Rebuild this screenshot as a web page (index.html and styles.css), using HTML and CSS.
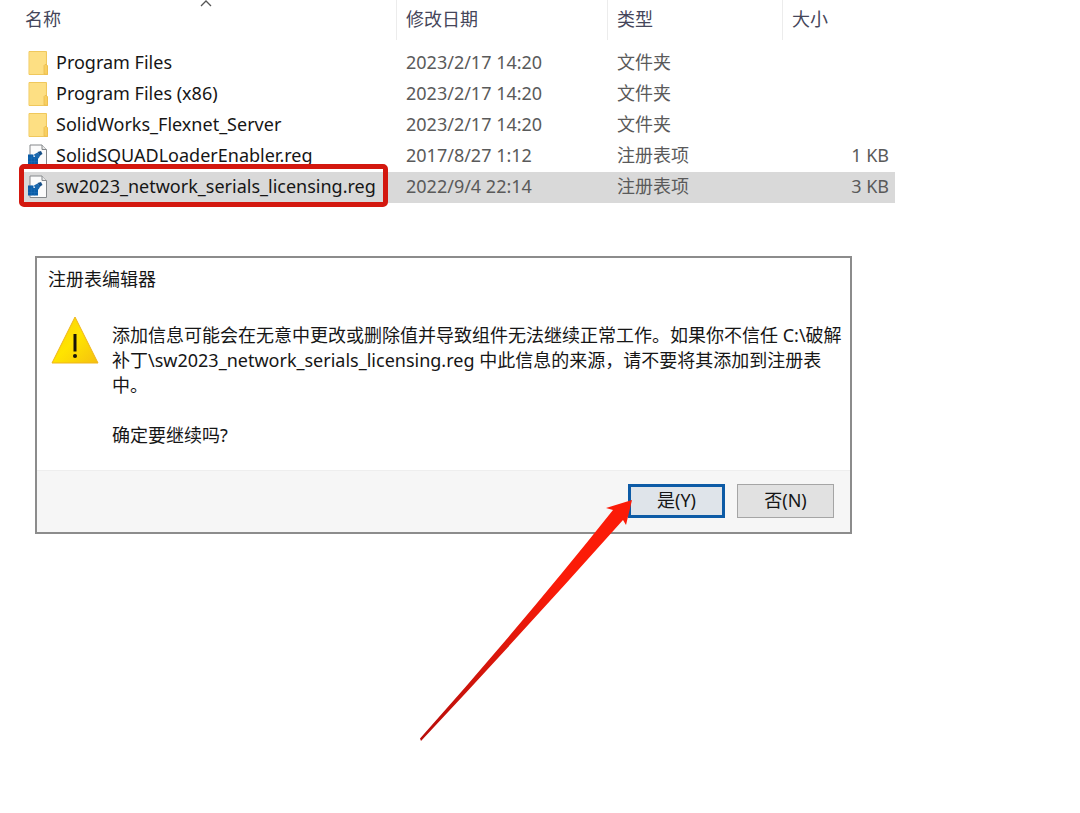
FILE: index.html
```html
<!DOCTYPE html>
<html lang="zh-CN">
<head>
<meta charset="utf-8">
<title>注册表编辑器</title>
<link rel="stylesheet" href="styles.css">
</head>
<body>
<svg class="symbols" aria-hidden="true">
  <symbol id="folder" viewBox="0 0 20 24">
    <path d="M1 0.5H18.5V14L19.5 15V23.5H1Z" fill="#fbdc7c" stroke="#f0c85c"/>
    <path d="M1.5 1H17.500V23H1.500Z" fill="#fddf83"/>
    <path d="M16 23V14.500L17 13.500H18.500L19.500 15V23.500Z" fill="#f8cf60" stroke="#e9b94b" stroke-width=".7"/>
  </symbol>
  <symbol id="reg" viewBox="0 0 20 24">
    <path d="M2 1H14L18.500 5.500V22.500H2Z" fill="#fbfbfb" stroke="#85888b"/>
    <path d="M14 1V5.500H18.500" fill="#e8e8e8" stroke="#85888b"/>
    <path d="M0 10.500H5.500V13H10V20.500H0Z" fill="#0a5da8"/>
    <path d="M0 14H10M0 17.500H10M3.300 10.500V20.500M6.600 14V20.500" stroke="#2272b8" stroke-width=".5"/>
    <path d="M6 10.500L9.500 8.500L12.500 11L10.500 14.500L7 13Z" fill="#1a68ae"/>
    <path d="M9.500 8L13 7L14.500 10L12 11.500Z" fill="#174f86"/>
  </symbol>
</svg>
<main>
  <table class="files">
    <colgroup><col><col class="col-date"><col class="col-type"><col class="col-size"></colgroup>
    <thead>
      <tr>
        <th scope="col" aria-sort="ascending">名称<svg class="sort" viewBox="0 0 12 7" aria-hidden="true"><path d="M1 6L6 1L11 6" fill="none" stroke="#555" stroke-width="1.300"/></svg></th>
        <th scope="col">修改日期</th><th scope="col">类型</th><th scope="col">大小</th>
      </tr>
    </thead>
    <tbody>
      <tr><td><div class="file"><svg class="icon" aria-hidden="true"><use href="#folder"/></svg>Program Files</div></td><td>2023/2/17 14:20</td><td>文件夹</td><td></td></tr>
      <tr><td><div class="file"><svg class="icon" aria-hidden="true"><use href="#folder"/></svg>Program Files (x86)</div></td><td>2023/2/17 14:20</td><td>文件夹</td><td></td></tr>
      <tr><td><div class="file"><svg class="icon" aria-hidden="true"><use href="#folder"/></svg>SolidWorks_Flexnet_Server</div></td><td>2023/2/17 14:20</td><td>文件夹</td><td></td></tr>
      <tr><td><div class="file"><svg class="icon" aria-hidden="true"><use href="#reg"/></svg>SolidSQUADLoaderEnabler.reg</div></td><td>2017/8/27 1:12</td><td>注册表项</td><td>1 KB</td></tr>
      <tr class="selected"><td><div class="file"><svg class="icon" aria-hidden="true"><use href="#reg"/></svg>sw2023_network_serials_licensing.reg</div><span class="highlight"></span></td><td>2022/9/4 22:14</td><td>注册表项</td><td>3 KB</td></tr>
    </tbody>
  </table>

  <section class="dialog" role="alertdialog" aria-labelledby="title" aria-describedby="message">
    <h1 id="title">注册表编辑器</h1>
    <div class="content">
      <svg class="warning" viewBox="0 0 48 48" aria-hidden="true">
        <defs><linearGradient id="amber" x1="0" y1="0" x2="1" y2="1"><stop offset="0" stop-color="#f9cf10"/><stop offset=".5" stop-color="#ffe400"/><stop offset="1" stop-color="#f5c010"/></linearGradient></defs>
        <path d="M24 1L47 47H1Z" fill="url(#amber)" stroke="#efb51d"/>
        <path d="M22.500 18H25.500V35.500H22.500Z" fill="#17140a"/><circle cx="24" cy="40" r="2" fill="#17140a"/>
      </svg>
      <div id="message" class="message">
        <p>添加信息可能会在无意中更改或删除值并导致组件无法继续正常工作。如果你不信任 C:\破解<br>补丁\sw2023_network_serials_licensing.reg 中此信息的来源，请不要将其添加到注册表<br>中。</p>
        <p>确定要继续吗?</p>
      </div>
    </div>
    <div class="actions">
      <div class="primary">
        <button class="yes" type="button">是(Y)</button>
        <svg class="arrow" viewBox="0 0 214 242" aria-hidden="true">
          <defs><linearGradient id="red" x1="0" y1="1" x2="1" y2="0"><stop offset="0" stop-color="#b80d0a"/><stop offset=".35" stop-color="#d9170c"/><stop offset=".65" stop-color="#fb1b08"/></linearGradient></defs>
          <path d="M213 1L187 9L194 11Q104 124 1 239.500L2 242Q104 133 204 21L207 26Z" fill="url(#red)"/>
        </svg>
      </div>
      <button class="no" type="button">否(N)</button>
    </div>
  </section>
</main>
</body>
</html>
```
FILE: styles.css
```css
* { box-sizing: border-box; }
body { margin: 0; background: #fff; color: #161616; font: 18px/25px "Noto Sans", "Noto Sans CJK SC", sans-serif; }
main { min-height: 100vh; padding-bottom: 240px; }
.symbols { position: absolute; width: 0; height: 0; }

.files { width: calc(100% - 204px); max-width: 876px; margin-left: 19px; border-collapse: separate; border-spacing: 0; table-layout: fixed; }
.col-date { width: 211px; }
.col-type { width: 175px; }
.col-size { width: 112px; }
th { position: relative; height: 40px; padding: 0 0 1px 9px; text-align: left; font-weight: 400; color: #45465a; border-right: 1px solid #ececec; }
th:first-child { padding-left: 6px; }
th:last-child { border-right: 0; }
.sort { position: absolute; top: 0; left: 48%; width: 12px; height: 7px; }
tbody::before { content: ""; display: block; height: 8px; }
td { position: relative; height: 31px; padding: 0 0 2px 9px; white-space: nowrap; color: #5a5a5a; }
td:last-child { padding: 0 6px 2px 0; text-align: right; }
.file { display: flex; align-items: center; gap: 8px; color: #161616; }
.icon { flex: none; width: 20px; height: 24px; }
.selected { background: #d9d9d9; }
.highlight { position: absolute; inset: -8px 9px -4px 0; border: 5px solid #d3180f; border-radius: 5px; }

.dialog { width: calc(100% - 263px); max-width: 817px; margin: 53px 0 0 35px; border: 2px solid #8c8c8c; }
h1 { margin: 0; padding: 9px 11px 8px; font-size: 18px; line-height: 25px; font-weight: 400; }
.content { display: flex; gap: 13px; padding: 16px 0 22px 14px; }
.warning { flex: none; width: 48px; height: 48px; }
.message { padding-top: 7px; white-space: nowrap; }
.message p { margin: 0 0 25px; }
.message p:last-child { margin: 0; }
.actions { display: flex; justify-content: flex-end; gap: 12px; padding: 13px 16px 14px; background: #f6f6f6; border-top: 1px solid #eee; }
.primary { position: relative; }
button { display: block; width: 97px; height: 34px; padding: 0 0 2px; font: inherit; color: #161616; background: #e1e1e1; border: 1px solid #a5a5a5; }
.yes { background: #dfe4ea; border: 3px solid #0d5ba6; }
.arrow { position: absolute; top: 15px; right: calc(100% - 5px); width: 214px; height: 242px; pointer-events: none; }
```
